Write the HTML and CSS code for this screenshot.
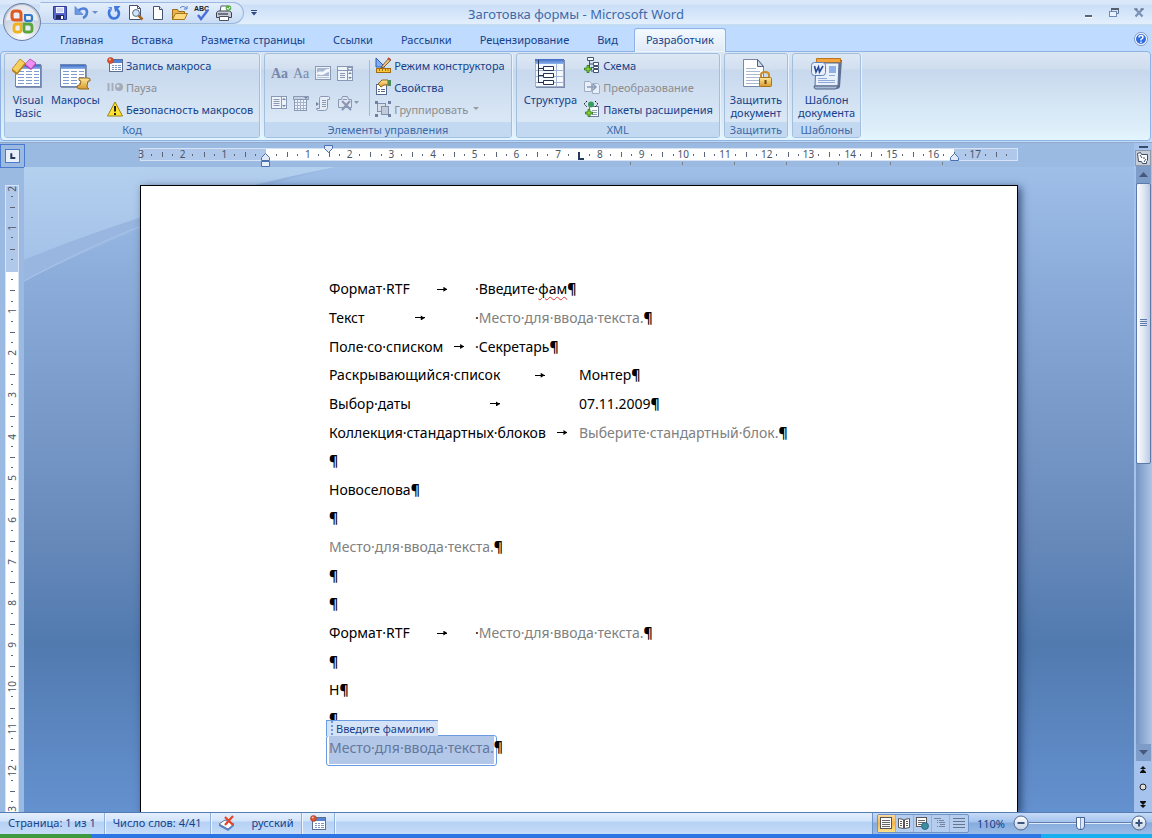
FILE: index.html
```html
<!DOCTYPE html>
<html lang="ru">
<head>
<meta charset="utf-8">
<title>Заготовка формы - Microsoft Word</title>
<link rel="stylesheet" href="styles.css">
</head>
<body>
<svg class="defs" width="0" height="0" aria-hidden="true">
  <defs>
    <linearGradient id="gold" x1="0" y1="0" x2="0" y2="1"><stop offset="0" stop-color="#ffe89a"/><stop offset="1" stop-color="#d99a2b"/></linearGradient>
    <linearGradient id="sky" x1="0" y1="0" x2="0" y2="1"><stop offset="0" stop-color="#3d6bc4"/><stop offset="1" stop-color="#8fb4ee"/></linearGradient>
    <linearGradient id="silver" x1="0" y1="0" x2="0" y2="1"><stop offset="0" stop-color="#ffffff"/><stop offset="1" stop-color="#c3d0e4"/></linearGradient>
    <symbol id="table32" viewBox="0 0 32 32">
      <rect x="4" y="7" width="26" height="23" fill="#8494b0"/><rect x="3.500" y="6.500" width="25" height="22" fill="#fff" stroke="#6f86b3"/>
      <rect x="4" y="7" width="24" height="4" fill="url(#sky)"/>
      <path d="M6 13.500h6M14 13.500h6M22 13.500h5M6 16.500h6M14 16.500h6M22 16.500h5M6 19.500h6M14 19.500h6M22 19.500h5M6 22.500h6M14 22.500h6M22 22.500h5M6 25.500h6M14 25.500h6M22 25.500h5" stroke="#7f9cd0"/>
    </symbol>
    <symbol id="record16" viewBox="0 0 16 16">
      <rect x="2.500" y="2.500" width="13" height="12" fill="#fff" stroke="#5b6f96"/><rect x="3" y="3" width="12" height="3" fill="#5583d4"/>
      <path d="M5 8.500h2M8 8.500h2M11 8.500h3M5 10.500h2M8 10.500h2M11 10.500h3M5 12.500h2M8 12.500h2M11 12.500h3" stroke="#7d97c4"/>
      <circle cx="3.500" cy="3.500" r="3" fill="#d9532f" stroke="#a33a20" stroke-width=".6"/><circle cx="2.800" cy="2.600" r="1" fill="#ffb59a"/>
    </symbol>
    <symbol id="plus7" viewBox="0 0 8 8"><path d="M3 .5h2V3h2.500v2H5v2.500H3V5H.5V3H3z" fill="#8fd43a" stroke="#2f7a1c" stroke-width=".9"/></symbol>
  </defs>
</svg>

<header class="titlebar">
  <div class="quick">
    <div class="qat" role="toolbar" aria-label="Панель быстрого доступа">
      <button class="tool" aria-label="Сохранить"><svg viewBox="0 0 16 16"><path d="M1.500 1.500h13v13h-12l-1-1z" fill="#5566cc" stroke="#2f3a94"/><rect x="4" y="2" width="8" height="6" fill="#f2f5ff"/><path d="M5 4h6M5 6h6" stroke="#aab4dd"/><rect x="4" y="10" width="8" height="4" fill="#23285e"/><rect x="9" y="11" width="2" height="3" fill="#fff"/></svg></button>
      <button class="tool undo" aria-label="Отменить"><svg viewBox="0 0 16 16"><path d="M4 6c4-4 9-3 9 1 0 3-2 5-4 6" fill="none" stroke="#4f7fd6" stroke-width="2.600"/><path d="M1 1.500v8h8z" fill="#6d9ae6" stroke="#4472c8" stroke-width=".6"/></svg></button>
      <button class="drop" aria-label="Список отмены"><svg viewBox="0 0 6 4"><path d="M0 0h6L3 3z" fill="#6c8fc9"/></svg></button>
      <button class="tool" aria-label="Повторить"><svg viewBox="0 0 16 16"><path d="M4 4.500C1.500 9 4 13.500 8 13.500s7-5 3-9" fill="none" stroke="#3f78dc" stroke-width="2.600"/><path d="M8 1h6.500l-5.500 6z" fill="#3f78dc"/><path d="M2 2h4v4z" fill="#5f93ec"/></svg></button>
      <button class="tool" aria-label="Просмотр"><svg viewBox="0 0 16 16"><path d="M1.500.5h8l3 3v11h-11z" fill="#fff" stroke="#46536f"/><path d="M9.500.5v3h3" fill="none" stroke="#46536f"/><circle cx="8" cy="8" r="3.400" fill="#cfe4fb" stroke="#5b6c86"/><path d="M10.500 10.500l4 4" stroke="#a5661f" stroke-width="2.500"/></svg></button>
      <button class="tool" aria-label="Создать"><svg viewBox="0 0 16 16"><path d="M3.500 1.500h6l3 3v10h-9z" fill="#fff" stroke="#46536f"/><path d="M9.500 1.500v3h3" fill="#dbe6f5" stroke="#46536f"/></svg></button>
      <button class="tool" aria-label="Открыть"><svg viewBox="0 0 16 16"><path d="M.5 14.500V4.500h5l1 2h6v3" fill="#e9b54c" stroke="#9a6a18"/><path d="M.5 14.500l3-6h12l-3 6z" fill="#ffd97e" stroke="#a8741d"/><path d="M8 3c2-2 4-2 6 0m1-2v3h-3" fill="none" stroke="#4c79c4"/></svg></button>
      <button class="tool" aria-label="Орфография"><svg viewBox="0 0 16 16"><text x="0" y="6" class="abc">ABC</text><path d="M4 10l3 4 7-9" fill="none" stroke="#4a6fd8" stroke-width="2.400"/></svg></button>
      <button class="tool" aria-label="Печать"><svg viewBox="0 0 16 16"><path d="M4 7l1-6h7l-1 6" fill="#fff" stroke="#555e70"/><path d="M.5 7.500l2-1.500h11l2 1.500v5h-15z" fill="#c9cdd6" stroke="#3c4452"/><rect x="2" y="8" width="10" height="2" fill="#6a7180"/><path d="M3.500 11.500h9v4h-9z" fill="#fff" stroke="#4a5260"/><circle cx="12.500" cy="3" r="2.800" fill="#58ad4a"/><path d="M11 3l1.200 1.400L14 2" fill="none" stroke="#fff"/></svg></button>
    </div>
    <button class="qat-more" aria-label="Настройка панели"><svg viewBox="0 0 8 6"><path d="M1 .5h6" stroke="#2c4a86"/><path d="M1 2h6L4 5.500z" fill="#2c4a86"/></svg></button>
  </div>
  <h1 class="title">Заготовка формы - Microsoft Word</h1>
  <div class="winbtns">
    <button aria-label="Свернуть"><svg viewBox="0 0 10 10"><path d="M1 8h7" stroke="#5b6675" stroke-width="2"/><path d="M1 9.500h7" stroke="#fff"/></svg></button>
    <button aria-label="Восстановить"><svg viewBox="0 0 10 10"><path d="M2.500 5V1.500h7v4h-2" fill="none" stroke="#66748a"/><path d="M2 1h8" stroke="#55606f" stroke-width="2"/><rect x=".5" y="3.500" width="7" height="5" fill="#e9f2fd" stroke="#6e8cba"/></svg></button>
    <button aria-label="Закрыть"><svg viewBox="0 0 10 10"><path d="M1.500 1l7 7.500M8.500 1l-7 7.500" stroke="#7d93b5" stroke-width="2.400"/><path d="M0 1h3.500M6.500 1H10" stroke="#555f70"/></svg></button>
  </div>
</header>

<button class="office" aria-label="Кнопка Office">
  <svg viewBox="0 0 40 40">
    <defs><radialGradient id="orb" cx=".5" cy=".85" r=".9"><stop offset="0" stop-color="#fff"/><stop offset=".5" stop-color="#d4dae6"/><stop offset="1" stop-color="#aeb9cc"/></radialGradient></defs>
    <circle cx="20" cy="20" r="18.500" fill="url(#orb)" stroke="#6d80a3"/><path d="M4 19a16 16 0 0 1 32 0c-9-3-23-3-32 0z" fill="#fff" opacity=".6"/>
    <path d="M19 18h-6q-3 0-3-3v-3q0-3 3-3h3q3 0 3 3z" fill="none" stroke="#df5a23" stroke-width="3"/>
    <path d="M23 13h5q2 0 2 2v2q0 2-2 2h-3q-2 0-2-2z" fill="none" stroke="#2f79c9" stroke-width="2.200"/>
    <path d="M19 22h-4q-3 0-3 3v3q0 2 3 2h2q2 0 2-2z" fill="none" stroke="#f1b21d" stroke-width="2.800"/>
    <path d="M22 22h5q3 0 3 3v3q0 2-3 2h-3q-2 0-2-2z" fill="none" stroke="#5aa63c" stroke-width="2.800"/>
  </svg>
</button>

<nav class="tabs" aria-label="Вкладки ленты">
  <button class="tab">Главная</button>
  <button class="tab">Вставка</button>
  <button class="tab">Разметка страницы</button>
  <button class="tab">Ссылки</button>
  <button class="tab">Рассылки</button>
  <button class="tab">Рецензирование</button>
  <button class="tab">Вид</button>
  <button class="tab active">Разработчик</button>
  <button class="help" aria-label="Справка"><svg viewBox="0 0 14 14"><circle cx="7" cy="7" r="6.500" fill="#fff" stroke="#7a96bf"/><circle cx="7" cy="7" r="5" fill="#2f6be0"/><path d="M5 5.500q0-2 2-2t2 1.700Q9 6.500 7 7.300V8.500M7 9.500v1.500" fill="none" stroke="#fff" stroke-width="1.400"/></svg></button>
</nav>

<section class="ribbon" aria-label="Разработчик">
  <div class="group">
    <div class="group-body">
      <button class="big"><svg viewBox="0 0 32 32"><use href="#table32" width="32" height="32"/><path d="M0 12l8-11 5 4v2L5 17l-5-4z" fill="#b57d1d"/><path d="M0 11l8-10 5 4-8 10z" fill="#f6cf5f" stroke="#b98624" stroke-width=".8"/><path d="M13 7l5-6 6 4v2l-5 5-6-4z" fill="#a83bb0"/><path d="M13 6l5-5 6 4-5 6z" fill="#f08df0" stroke="#b54cbd" stroke-width=".8"/></svg><span>Visual<br>Basic</span></button>
      <button class="big"><svg viewBox="0 0 32 32"><g transform="translate(-2 0)"><use href="#table32" width="32" height="32"/></g><path d="M20 20h9q3 0 2 3h-2l-1 5q0 2 2 3h-9q-3 0-3-2t2-2h1l1-4q-3 0-2-3z" fill="url(#gold)" stroke="#94661c"/></svg><span>Макросы</span></button>
      <div class="stack">
        <button class="small"><svg viewBox="0 0 16 16"><use href="#record16" width="16" height="16"/></svg>Запись макроса</button>
        <button class="small" disabled><svg viewBox="0 0 16 16"><path d="M1.500 4v8M5.500 4v8" stroke="#a5adba" stroke-width="2"/><circle cx="12" cy="8" r="4" fill="#a3abba"/><circle cx="11" cy="7" r="1.500" fill="#d6dbe4"/></svg>Пауза</button>
        <button class="small"><svg viewBox="0 0 16 16"><path d="M8 1l7.500 14H.5z" fill="#ffe135" stroke="#9b8412" stroke-linejoin="round"/><path d="M8 5v5.500M8 12v2" stroke="#222" stroke-width="2"/></svg>Безопасность макросов</button>
      </div>
    </div>
    <h2>Код</h2>
  </div>

  <div class="group">
    <div class="group-body">
      <div class="controls">
        <button disabled aria-label="Форматированный текст"><svg viewBox="0 0 16 16"><text x="0" y="13" class="aa bold">Aa</text></svg></button>
        <button disabled aria-label="Текст"><svg viewBox="0 0 16 16"><text x="0" y="13" class="aa">Aa</text></svg></button>
        <button disabled aria-label="Рисунок"><svg viewBox="0 0 16 16"><rect x=".5" y="1.500" width="15" height="13" fill="#eef3fa" stroke="#8898b5"/><rect x="2" y="3" width="12" height="8" fill="#a9b8d2"/><path d="M2 8c3-3 5 0 7-2s3-2 5-2v3c-3 0-4 3-7 3s-3-1-5 0z" fill="#f4f7fc"/><path d="M2 12.500h12" stroke="#b3c0d6"/></svg></button>
        <button disabled aria-label="Поле со списком"><svg viewBox="0 0 16 16"><rect x=".5" y="1.500" width="15" height="14" fill="#eef3fa" stroke="#8898b5"/><path d="M1 5.500h14M10.500 2v13M3 8.500h5M3 10.500h5M3 12.500h5" stroke="#8898b5"/><rect x="10" y="1" width="6" height="5" fill="#8898b5"/><path d="M11 3h4l-2 2z" fill="#fff"/><path d="M13 7l2 2h-4zM13 14l2-2h-4z" fill="#74849f"/></svg></button>
        <button disabled aria-label="Раскрывающийся список"><svg viewBox="0 0 16 16"><rect x=".5" y="1.500" width="15" height="12" fill="#eef3fa" stroke="#8898b5"/><path d="M10.500 2v11M2.500 4.500h6M2.500 6.500h6M2.500 8.500h6M2.500 10.500h6" stroke="#8898b5"/><path d="M13 3l2 2h-4zM13 12l2-2h-4z" fill="#74849f"/></svg></button>
        <button disabled aria-label="Выбор даты"><svg viewBox="0 0 16 16"><path d="M.5 1.500h15v3H.5z" fill="#c6d1e4" stroke="#8898b5"/><path d="M11 2h4l-2 2z" fill="#74849f"/><rect x="1.500" y="4.500" width="12" height="11" fill="#eef3fa" stroke="#8898b5"/><path d="M2 7.500h11M2 10.500h11M2 13.500h11M4.500 5v10M7.500 5v10M10.500 5v10" stroke="#a3b1ca"/></svg></button>
        <button disabled aria-label="Коллекция блоков"><svg viewBox="0 0 16 16"><path d="M5.500 1.500h8q2 0 1 3h-2v8q0 3-3 3h-6q-2 0-2-2h3v-9q0-3 1-3z" fill="#e6edf7" stroke="#8898b5"/><path d="M7 5.500h4M7 7.500h4M7 9.500h4M7 11.500h4" stroke="#8898b5"/><path d="M1 7l3 2-3 2z" fill="#74849f"/></svg></button>
        <button disabled aria-label="Инструменты прежних версий"><svg viewBox="0 0 22 16"><path d="M1.500 4.500h3l1-3h5l1 3h3v8h-13z" fill="#dfe6f1" stroke="#8898b5"/><path d="M6 4.500h4" stroke="#8898b5"/><path d="M5 6l9 9M13 6l-8 9" stroke="#8898b5" stroke-width="2.200"/><path d="M17 6h5l-2.500 3z" fill="#8898b5"/></svg></button>
      </div>
      <div class="stack divided">
        <button class="small"><svg viewBox="0 0 16 16"><path d="M1 1v9h9z" fill="#7faef2" stroke="#2c58b5"/><path d="M7 9l7-8 2 2-7 7-3 1z" fill="#f1c47a" stroke="#5d4630" stroke-width=".8"/><path d="M13 1l2 2" stroke="#c43" stroke-width="2"/><rect x="1.500" y="11.500" width="14" height="4" fill="#ffc83c" stroke="#a06c12"/><path d="M4.500 12v2M7.500 12v2M10.500 12v2M13 12v2" stroke="#a06c12"/></svg>Режим конструктора</button>
        <button class="small"><svg viewBox="0 0 16 16"><rect x="1.500" y="5.500" width="10" height="10" fill="#fff" stroke="#56698f"/><path d="M3 10.500h2M6 10.500h4M3 12.500h2M6 12.500h4" stroke="#56698f"/><path d="M3 5l4-4h6v5H9L6 8z" fill="url(#gold)" stroke="#8a6320"/><rect x="13" y="1" width="3" height="6" fill="#4f8b58"/></svg>Свойства</button>
        <button class="small" disabled><svg viewBox="0 0 16 16"><rect x="2.500" y="2.500" width="8" height="8" fill="#d7deea" stroke="#8090ad"/><rect x="6.500" y="5.500" width="7" height="8" fill="#c0cadb" stroke="#8090ad"/><path d="M0 0h3v3H0zM13 0h3v3h-3zM0 13h3v3H0zM13 13h3v3h-3z" fill="#6f80a2"/></svg>Группировать<svg class="caret" viewBox="0 0 6 4"><path d="M0 0h6L3 3z" fill="#9a9a9a"/></svg></button>
      </div>
    </div>
    <h2>Элементы управления</h2>
  </div>

  <div class="group">
    <div class="group-body">
      <button class="big"><svg viewBox="0 0 32 32"><rect x="2" y="2" width="29" height="28" fill="#7d8aa5"/><rect x="1.500" y="1.500" width="28" height="27" fill="#f5f8fd" stroke="#9fb0cc"/><rect x="1" y="1" width="29" height="5" fill="url(#sky)"/><path d="M2 12.500h27M2 18.500h27M2 24.500h27M22.500 6v22" stroke="#a5b6d4"/><path d="M4.500 2v23M5 10.500h4M5 17.500h4M5 24.500h4" fill="none" stroke="#26354f"/><path d="M9.500 8.500h10v4h-10zM9.500 15.500h10v4h-10zM9.500 22.500h10v4h-10z" fill="#fff" stroke="#26354f"/></svg><span>Структура</span></button>
      <div class="stack">
        <button class="small"><svg viewBox="0 0 16 16"><path d="M3.500.5h6v3h-6zM9.500 5.500h5v3h-5zM9.500 9.500h5v2h-5zM9.500 12.500h5v3h-5zM5.500 4v9M5.500 7h4M7 10.500h2M7 14h2" fill="#fff" stroke="#3f5375"/><use href="#plus7" x="0" y="8" width="8" height="8"/></svg>Схема</button>
        <button class="small" disabled><svg viewBox="0 0 16 16"><path d="M.5 2.500h5l2 2v8h-7zM8.500 4.500h5l2 2v8h-7z" fill="#e9eff8" stroke="#a0aec6"/><path d="M3 8h8M9 5l3 3-3 3" fill="none" stroke="#8b9bb6" stroke-width="1.500"/></svg>Преобразование</button>
        <button class="small"><svg viewBox="0 0 16 16"><rect x="5.500" y="5.500" width="9" height="10" fill="#fff" stroke="#6c7c98"/><path d="M8 9.500h5M8 11.500h5M8 13.500h5" stroke="#8ea0c0"/><circle cx="7" cy="3.500" r="3" fill="#3d9a63"/><path d="M3 0L0 3l3 3M11 0l3 3-3 3" fill="none" stroke="#111" stroke-dasharray="1.500 1"/><use href="#plus7" x="1" y="8" width="8" height="8"/></svg>Пакеты расширения</button>
      </div>
    </div>
    <h2>XML</h2>
  </div>

  <div class="group">
    <div class="group-body">
      <button class="big"><svg viewBox="0 0 32 32"><path d="M3.500 1.500h14l6 7v20h-20z" fill="#fff" stroke="#7889a5"/><path d="M17.500 1.500v7h6z" fill="#cfdcf0" stroke="#52617d"/><path d="M6 10.500h10M6 13.500h14M6 16.500h14M6 19.500h14M6 22.500h14M6 25.500h14" stroke="#a9b9d3"/><path d="M21 20v-3q0-3 4-3t4 3v3" fill="none" stroke="#c98d23" stroke-width="2"/><rect x="19.500" y="19.500" width="12" height="9" rx="1" fill="url(#gold)" stroke="#a8731a"/><path d="M25.500 22v4" stroke="#6b4710" stroke-width="2"/></svg><span>Защитить<br>документ</span></button>
    </div>
    <h2>Защитить</h2>
  </div>

  <div class="group">
    <div class="group-body">
      <button class="big"><svg viewBox="0 0 32 32"><path d="M7 2h24l-2 27q-1 2-3 2H6z" fill="#5d7191"/><path d="M5.500.5h24v4h-24z" fill="#f2a33c" stroke="#bb761f"/><path d="M5 5h23l-1 23H4z" fill="#e8f0fb" stroke="#5a7099"/><path d="M3 28q0 3 2 3h20l2-3H3z" fill="#aab9d2" stroke="#4d6388"/><path d="M7 20.500h9M7 22.500h17M7 24.500h17M18 17.500h6" stroke="#8fa9d8"/><rect x="18" y="8" width="7" height="7" fill="#8db1e8"/><rect x=".5" y="4.500" width="14" height="13" rx="3" fill="#e9f0fc" stroke="#5c80c2"/><path d="M3.500 8l1.500 6 2.500-5 1 5 3.500-6" fill="none" stroke="#24489c" stroke-width="1.600"/></svg><span>Шаблон<br>документа</span></button>
    </div>
    <h2>Шаблоны</h2>
  </div>
</section>

<main class="workspace">
  <div class="left-rail">
    <button class="tabstop" aria-label="Тип табуляции"><svg viewBox="0 0 15 15"><path d="M6 4v6h5" fill="none" stroke="#243a5c" stroke-width="2.500"/></svg></button>
    <div class="vruler" aria-hidden="true">
      <div class="half"><b>2</b></div><div><b>1</b></div><div></div><div><b>1</b></div><div><b>2</b></div><div><b>3</b></div><div><b>4</b></div><div><b>5</b></div><div><b>6</b></div><div><b>7</b></div><div><b>8</b></div><div><b>9</b></div><div><b>10</b></div><div><b>11</b></div><div><b>12</b></div><div class="half end"><b>3</b></div>
    </div>
  </div>

  <div class="center">
    <div class="hstrip">
      <div class="hruler" aria-hidden="true">
        <div class="scale">
          <div class="half"><b>3</b></div><div><b>2</b></div><div><b>1</b></div><div></div><div><b>1</b></div><div><b>2</b></div><div><b>3</b></div><div><b>4</b></div><div><b>5</b></div><div><b>6</b></div><div><b>7</b></div><div><b>8</b></div><div><b>9</b></div><div><b>10</b></div><div><b>11</b></div><div><b>12</b></div><div><b>13</b></div><div><b>14</b></div><div><b>15</b></div><div><b>16</b></div><div><b>17</b></div><div class="half end"></div>
        </div>
        <svg class="mark indent" viewBox="0 0 9 14"><path d="M.5 7.500V4.500l4-4 4 4v3z" fill="#dfe9f8" stroke="#4a72b0"/><path d="M.5 8.500h8v5h-8z" fill="#e8f0fb" stroke="#4a72b0"/></svg>
        <svg class="mark first" viewBox="0 0 9 9"><path d="M.5.5h8v3l-4 4-4-4z" fill="#dfe9f8" stroke="#4a72b0"/></svg>
        <svg class="mark tabmark" viewBox="0 0 6 8"><path d="M1 0v7h5" fill="none" stroke="#243a5c" stroke-width="2"/></svg>
        <svg class="mark right" viewBox="0 0 9 8"><path d="M.5 7.500V4.500l4-4 4 4v3z" fill="#dfe9f8" stroke="#4a72b0"/></svg>
        <div class="defaults"><i></i><i></i><i></i><i></i><i></i><i></i><i></i></div>
      </div>
    </div>

    <div class="canvas">
      <svg class="swoosh" viewBox="0 0 340 120" aria-hidden="true">
        <defs><linearGradient id="sw" x1="0" y1="0" x2="0" y2="1"><stop offset="0" stop-color="#b4d0ef"/><stop offset="1" stop-color="#a4c1e8"/></linearGradient></defs>
        <path d="M0 93Q150 32 311 0Q150 40 0 114z" fill="#98b6df"/>
        <path d="M0 0h311Q150 32 0 93z" fill="url(#sw)"/>
        <path d="M0 114Q90 66 160 44" fill="none" stroke="#a9c6ec"/>
      </svg>
      <article class="page">
        <div class="text">
          <p><span class="lead t1">Формат·RTF<i class="arrow"></i></span><span>·Введите·<u class="spell">фам</u><b>¶</b></span></p>
          <p><span class="lead t1">Текст<i class="arrow"></i></span><span>·<span class="ph">Место·для·ввода·текста.</span><b>¶</b></span></p>
          <p><span class="lead t1">Поле·со·списком<i class="arrow"></i></span><span>·Секретарь<b>¶</b></span></p>
          <p><span class="lead t2">Раскрывающийся·список<i class="arrow"></i></span><span>Монтер<b>¶</b></span></p>
          <p><span class="lead t2">Выбор·даты<i class="arrow"></i></span><span>07.11.2009<b>¶</b></span></p>
          <p><span class="lead t2">Коллекция·стандартных·блоков<i class="arrow"></i></span><span><span class="ph">Выберите·стандартный·блок.</span><b>¶</b></span></p>
          <p><b>¶</b></p>
          <p>Новоселова<b>¶</b></p>
          <p><b>¶</b></p>
          <p><span class="ph">Место·для·ввода·текста.</span><b>¶</b></p>
          <p><b>¶</b></p>
          <p><b>¶</b></p>
          <p><span class="lead t1">Формат·RTF<i class="arrow"></i></span><span>·<span class="ph">Место·для·ввода·текста.</span><b>¶</b></span></p>
          <p><b>¶</b></p>
          <p>Н<b>¶</b></p>
          <p><b>¶</b></p>
          <p class="field-row"><span class="field"><span class="field-tag">Введите фамилию</span><span class="selected">Место·для·ввода·текста.</span></span><b>¶</b></p>
        </div>
      </article>
    </div>
  </div>

  <div class="right-rail">
    <div class="split"></div>
    <button class="ruler-toggle" aria-label="Линейка"><svg viewBox="0 0 14 14"><path d="M1.500 2.500l3-1 1 2h6v6l-1 1v2h-4l-1-2h-3z" fill="#fff" stroke="#3d4d6b"/><path d="M4 4l2 3M8 6v2M10 8l-2 3" stroke="#3d4d6b"/></svg></button>
    <button class="sb-arrow" aria-label="Вверх"><svg viewBox="0 0 9 5"><path d="M0 5l4.500-5L9 5z" fill="#46587c"/></svg></button>
    <div class="track"><div class="thumb"><i></i></div></div>
    <button class="sb-arrow" aria-label="Вниз"><svg viewBox="0 0 9 5"><path d="M0 0l4.500 5L9 0z" fill="#46587c"/></svg></button>
    <button class="browse" aria-label="Предыдущая страница"><svg viewBox="0 0 8 8"><path d="M4 0l3 3H1zM4 3l3 3H1zM1 6h6v1H1z" fill="#111"/></svg></button>
    <button class="browse" aria-label="Выбор объекта перехода"><svg viewBox="0 0 8 8"><circle cx="4" cy="4" r="3" fill="#ddd" stroke="#222"/></svg></button>
    <button class="browse" aria-label="Следующая страница"><svg viewBox="0 0 8 8"><path d="M4 8l3-3H1zM4 5l3-3H1zM1 1h6v1H1z" fill="#111"/></svg></button>
  </div>
</main>

<footer class="status">
  <button class="cell">Страница: 1 из 1</button>
  <button class="cell">Число слов: 4/41</button>
  <button class="cell lang"><svg viewBox="0 0 16 16"><path d="M0 9l6-4 9 4-6 5z" fill="#fff" stroke="#56719f"/><path d="M0 9v2l9 5v-2zM9 16l6-5V9l-6 5z" fill="#5c83c4"/><path d="M6 2l8 8M14 1L6 10" stroke="#e5432a" stroke-width="2.200"/></svg><span>русский</span></button>
  <button class="cell macro" aria-label="Запись макроса"><svg viewBox="0 0 16 16"><use href="#record16" width="16" height="16"/></svg></button>
  <div class="zoombar">
    <div class="views">
      <button class="on" aria-label="Разметка страницы"><svg viewBox="0 0 14 14"><rect x="1.500" y="1.500" width="11" height="11" fill="#fff" stroke="#555"/><path d="M3 4.500h8M3 6.500h8M3 8.500h8M3 10.500h8" stroke="#666"/></svg></button>
      <button aria-label="Режим чтения"><svg viewBox="0 0 14 14"><path d="M1.500 2.500l5 1v9l-5-1zM12.500 2.500l-5 1v9l5-1z" fill="#fff" stroke="#555"/><path d="M3 5.500h2M3 7.500h2M3 9.500h2M9 5.500h2M9 7.500h2M9 9.500h2" stroke="#555"/></svg></button>
      <button aria-label="Веб-документ"><svg viewBox="0 0 14 14"><rect x="1.500" y="1.500" width="10" height="9" fill="#fff" stroke="#555"/><path d="M3 4.500h7M3 6.500h7M3 8.500h4" stroke="#666"/><circle cx="10" cy="10" r="3.500" fill="#3b8fa0" stroke="#285e8c" stroke-width=".8"/></svg></button>
      <button aria-label="Структура"><svg viewBox="0 0 14 14"><path d="M1 2.500h7M4 4.500h1M6 4.500h5M4 6.500h1M6 6.500h6M7 8.500h5M4 10.500h1M6 10.500h6" stroke="#75839b"/></svg></button>
      <button aria-label="Черновик"><svg viewBox="0 0 14 14"><path d="M1 2.500h12M1 5.500h12M1 8.500h12M1 11.500h12" stroke="#66748c"/></svg></button>
    </div>
    <button class="percent">110%</button>
    <button class="round" aria-label="Уменьшить"><svg viewBox="0 0 16 16"><circle cx="8" cy="8" r="7" fill="url(#silver)" stroke="#4a6492"/><path d="M4.500 8h7" stroke="#3d5680" stroke-width="2"/></svg></button>
    <input class="zoom" type="range" min="0" max="100" value="50" aria-label="Масштаб">
    <button class="round" aria-label="Увеличить"><svg viewBox="0 0 16 16"><circle cx="8" cy="8" r="7" fill="url(#silver)" stroke="#4a6492"/><path d="M4.500 8h7M8 4.500v7" stroke="#3d5680" stroke-width="2"/></svg></button>
  </div>
</footer>
<div class="taskbar"><div class="start"></div><div class="tray"></div></div>
</body>
</html>
```
FILE: styles.css
```css
* { box-sizing: border-box; }

body {
  margin: 0;
  height: 100vh;
  display: flex;
  flex-direction: column;
  position: relative;
  overflow: hidden;
  background: #bfdbff;
  color: #15428b;
  font: 11px/13px "Noto Sans", "Open Sans", sans-serif;
}

button {
  margin: 0;
  padding: 0;
  border: 0;
  background: none;
  color: inherit;
  font: inherit;
}

svg { display: block; flex: none; }
h1, h2, p { margin: 0; font-weight: normal; }
.defs { position: absolute; }

/* Title bar */
.titlebar {
  flex: none;
  height: 26px;
  display: grid;
  grid-template-columns: 1fr auto 1fr;
  align-items: center;
  background: linear-gradient(#dae8fa 0 4px, #cadef7 5px, #e3effd 24px, #a9cdea 25px, #d8e8fa 26px);
}
.quick { display: flex; align-items: center; padding-left: 40px; }
.qat {
  display: flex;
  align-items: center;
  gap: 6px;
  height: 22px;
  padding: 0 11px;
  border: 1px solid #9ab8e0;
  border-left-color: transparent;
  border-radius: 0 11px 11px 0;
  background: linear-gradient(#e3eefc, #c9dcf4);
}
.tool svg { width: 16px; height: 16px; }
.undo { margin-right: -4px; }
.drop svg { width: 6px; height: 4px; }
.drop { margin-right: 2px; }
.abc { font: bold 7px "Liberation Sans", sans-serif; fill: #222; }
.qat-more { margin-left: 6px; }
.qat-more svg { width: 8px; height: 6px; }
.title {
  padding-top: 2px;
  font-size: 13px;
  line-height: 16px;
  color: #3e6aaa;
}
.winbtns { justify-self: end; display: flex; gap: 15px; padding-right: 8px; }
.winbtns svg { width: 10px; height: 10px; }

.office { position: absolute; left: 2px; top: 2px; z-index: 2; }
.office svg { width: 40px; height: 40px; }

/* Tabs */
.tabs {
  flex: none;
  height: 25px;
  display: flex;
  align-items: flex-end;
  gap: 4px;
  padding: 0 4px 0 48px;
}
.tab {
  height: 23px;
  padding: 0 11px 2px;
  border: 1px solid transparent;
  border-bottom: 0;
  white-space: nowrap;
}
.tab.active {
  border-color: #8db2e3;
  border-radius: 3px 3px 0 0;
  background: linear-gradient(#f4f9ff, #dfe9f6);
  box-shadow: inset 0 0 0 1px #eaf7ff;
  margin-bottom: -1px;
  height: 24px;
  z-index: 1;
}
.help { margin-left: auto; align-self: center; }
.help svg { width: 14px; height: 14px; }

/* Ribbon */
.ribbon {
  flex: none;
  display: flex;
  gap: 4px;
  height: 90px;
  margin-right: 1px;
  padding: 1px 3px 2px;
  border: 1px solid #8db2e3;
  border-radius: 4px;
  background: linear-gradient(#dbe6f4 0, #cfdded 17px, #c7d8ed 18px, #dff0fb 80px, #e3f6ff);
}
.group {
  display: flex;
  flex-direction: column;
  border: 1px solid #a3bfdf;
  border-radius: 3px;
  background: linear-gradient(#dde8f5 0, #d2dfef 15px, #c8d8ed 16px, #dae8f6 68px);
  box-shadow: 1px 0 0 #e8f2fc;
}
.group h2 {
  height: 15px;
  border-radius: 0 0 2px 2px;
  background: #c2d9f1;
  color: #3e6aaa;
  font-size: 11px;
  line-height: 15px;
  text-align: center;
}
.group-body { flex: 1; display: flex; padding: 0 6px 0 5px; }
.big {
  display: flex;
  flex-direction: column;
  align-items: center;
  gap: 3px;
  padding-top: 4px;
  margin-right: 7px;
}
.big:first-child { padding-left: 2px; }
.group-body .big:only-child { margin: 0; padding-left: 0; }
.group-body:has(.big:only-child) { justify-content: center; padding: 0 5px; }
.big svg { width: 32px; height: 32px; }
.stack { display: flex; flex-direction: column; }
.small {
  display: flex;
  align-items: center;
  gap: 3px;
  height: 22px;
  white-space: nowrap;
}
.small svg { width: 16px; height: 16px; }
.small .caret { width: 6px; height: 4px; margin-left: 2px; }
.small:disabled { color: #8d8d8d; }
.controls {
  display: grid;
  grid-template-columns: repeat(4, 22px);
  grid-template-rows: 30px 30px;
  align-items: center;
  padding: 4px 4px 0 1px;
}
.controls svg { width: 16px; height: 16px; overflow: visible; }
.controls button:last-child svg { width: 22px; }
.aa { font: 14px "Liberation Serif", serif; fill: #7888a8; }
.bold { font-weight: bold; }
.divided {
  margin-left: 6px;
  padding-left: 6px;
  background: linear-gradient(#9dbbe0, #9dbbe0) 0 6px / 1px 56px no-repeat;
}

/* Workspace */
.workspace {
  flex: 1;
  min-height: 0;
  display: flex;
  margin-top: 1px;
  border-top: 1px solid #92a9c9;
  background: #9bbae1;
}
.left-rail {
  flex: none;
  width: 24px;
  display: flex;
  flex-direction: column;
}
.tabstop {
  width: 25px;
  height: 24px;
  margin-top: 1px;
  padding: 4px;
  border: 1px solid #4a7ad0;
  flex: none;
}
.tabstop svg { width: 15px; height: 14px; background: #e8f0fb; border: 1px solid #4a7ad0; }
.vruler {
  flex: 1;
  min-height: 0;
  display: grid;
  grid-template-rows: 1fr repeat(14, 2fr) 1fr;
  width: 14px;
  margin: 17px 0 0 5px;
  border: 1px solid #d7e3f4;
  border-bottom: 0;
  background: linear-gradient(#b0c8ea 0 86px, #fff 86px);
  color: #4a5568;
  font: 10px/12px "Noto Sans", sans-serif;
}
.vruler div {
  display: flex;
  align-items: center;
  justify-content: center;
  min-height: 0;
  background:
    linear-gradient(#5c6577, #5c6577) 50% 0 / 5px 1px no-repeat,
    linear-gradient(#5c6577, #5c6577) 50% 25% / 2px 1px no-repeat,
    linear-gradient(#5c6577, #5c6577) 50% 75% / 2px 1px no-repeat;
}
.vruler b { writing-mode: vertical-rl; rotate: 180deg; font-weight: normal; }
.vruler .half { align-items: flex-start; background: linear-gradient(#5c6577, #5c6577) 50% 50% / 2px 1px no-repeat; }
.vruler .end {
  align-items: flex-end;
  background:
    linear-gradient(#5c6577, #5c6577) 50% 0 / 5px 1px no-repeat,
    linear-gradient(#5c6577, #5c6577) 50% 50% / 2px 1px no-repeat;
}

.center { flex: 1; min-width: 0; display: flex; flex-direction: column; }
.hstrip { flex: none; height: 24px; padding-top: 5px; }
.hruler { position: relative; width: 878px; max-width: 100%; margin: 0 auto; }
.scale {
  display: grid;
  grid-template-columns: 1fr repeat(20, 2fr) 1fr;
  height: 13px;
  border: 1px solid #d7e3f4;
  background: linear-gradient(90deg, #b0c8ea 0 14.3%, #fff 14.3% 92.8%, #b0c8ea 92.8%);
  color: #4a5568;
  font: 10px/11px "Noto Sans", sans-serif;
}
.scale div {
  display: flex;
  justify-content: center;
  min-width: 0;
  background:
    linear-gradient(#5c6577, #5c6577) 0 50% / 1px 5px no-repeat,
    linear-gradient(#5c6577, #5c6577) 25% 50% / 1px 2px no-repeat,
    linear-gradient(#5c6577, #5c6577) 75% 50% / 1px 2px no-repeat;
}
.scale b { font-weight: normal; }
.scale .half { background: linear-gradient(#5c6577, #5c6577) 50% 50% / 1px 2px no-repeat; }
.scale .half b { width: 0; margin-right: auto; display: flex; justify-content: center; }
.scale .end {
  background:
    linear-gradient(#5c6577, #5c6577) 0 50% / 1px 5px no-repeat,
    linear-gradient(#5c6577, #5c6577) 50% 50% / 1px 2px no-repeat;
}
.mark { position: absolute; width: 9px; }
.indent { left: 121px; top: 5px; height: 14px; }
.first { left: 184px; top: -3px; height: 9px; }
.tabmark { left: 438px; top: 4px; width: 6px; height: 8px; }
.right { left: 810px; top: 5px; height: 8px; }
.defaults { display: flex; gap: 51px; padding: 1px 0 0 490px; }
.defaults i { width: 1px; height: 3px; background: #7a7f88; }

.canvas {
  flex: 1;
  min-height: 0;
  position: relative;
  overflow: hidden;
  padding-top: 18px;
  background: linear-gradient(#9fbfe9 0, #8cadda 17%, #6789ba 58%, #517aaf 74%, #6491cf 100%);
}
.swoosh { position: absolute; left: 0; top: 0; width: 340px; height: 120px; }
.page {
  position: relative;
  width: 878px;
  max-width: 100%;
  height: 100%;
  margin: 0 auto;
  padding: 89px 188px 0;
  border: 1px solid #000;
  border-bottom: 0;
  background: #fff;
  box-shadow: 3px 2px 8px rgba(20, 40, 80, .7);
}
.text {
  display: grid;
  grid-auto-rows: 1fr;
  min-height: 487px;
  color: #000;
  font: 14px/24px "Noto Sans", sans-serif;
}
.text p { display: flex; align-items: center; white-space: nowrap; }
.lead { display: flex; align-items: center; }
.t1 { width: 146px; }
.t2 { width: 250px; }
.arrow {
  position: relative;
  width: 10px;
  height: 1px;
  margin: 0 auto;
  background: #000;
}
.arrow::after {
  content: "";
  position: absolute;
  right: 0;
  top: -2px;
  width: 5px;
  height: 5px;
  background: #000;
  clip-path: polygon(20% 0, 100% 50%, 20% 100%);
}
.ph { color: #808080; }
.spell { text-decoration: underline wavy #d33 1px; text-underline-offset: 2px; }
.text .field-row { align-items: flex-start; height: 28px; }
.field-row > b { line-height: 28px; position: relative; }
.field {
  position: relative;
  display: flex;
  flex: none;
  margin: 2px -3px 0 -3px;
  padding: 0 2px 1px;
  border: 1px solid #6a9ae0;
  border-radius: 3px;
}
.selected { padding-bottom: 4px; background: #b3c7e8; color: #64789c; }
.field-tag {
  position: absolute;
  left: -1px;
  bottom: 100%;
  padding: 1px 4px 1px 9px;
  border-top: 1px solid #6a9ae0;
  border-left: 1px solid #6a9ae0;
  background: radial-gradient(circle, #6a9ae0 1px, transparent 1px) 3px 3px / 4px 4px repeat-y, #d5e3f9;
  color: #15428b;
  font: 11px/13px "Noto Sans", sans-serif;
}

/* Vertical scroll bar */
.right-rail {
  flex: none;
  width: 18px;
  display: flex;
  flex-direction: column;
  align-items: center;
  background: #a6c3ee;
}
.split { width: 9px; height: 2px; margin: 3px 0 2px; background: #3a4a68; flex: none; }
.ruler-toggle { border: 1px solid #8c98ac; background: #c6cdd9; }
.ruler-toggle svg { width: 14px; height: 14px; }
.sb-arrow {
  flex: none;
  width: 15px;
  height: 17px;
  display: grid;
  place-items: center;
  background: #7d9cc8;
}
.sb-arrow svg { width: 9px; height: 5px; }
.track { flex: 1; min-height: 0; width: 15px; background: linear-gradient(90deg, #7594c2, #a9c2e4); }
.thumb {
  height: 50%;
  display: grid;
  place-items: center;
  border: 1px solid #5c79a8;
  border-radius: 2px;
  background: linear-gradient(90deg, #fafcff, #dfe7f4 50%, #bccbe3);
}
.thumb i { width: 7px; height: 8px; background: repeating-linear-gradient(#5c79a8 0 1px, transparent 1px 2px); }
.browse { flex: none; height: 17px; display: grid; place-items: center; }
.browse svg { width: 8px; height: 8px; }

/* Status bar */
.status {
  flex: none;
  height: 22px;
  display: flex;
  border-top: 1px solid #567db1;
  background: linear-gradient(#e3effd 0, #d3e4fa 8px, #b5d1f5 9px, #c7dcf8 100%);
}
.cell {
  padding: 0 8px 2px;
  border-right: 1px solid #8fb1de;
  box-shadow: 1px 0 0 #eef5fe;
  white-space: nowrap;
}
.lang { display: flex; align-items: center; gap: 17px; }
.cell svg { width: 16px; height: 16px; }
.zoombar {
  margin-left: auto;
  display: flex;
  align-items: center;
  padding: 0 5px 1px 4px;
  border-left: 1px solid #6f93c5;
  background: linear-gradient(#c6dbf7 0, #a4c3ed 9px, #86abdc 10px, #9bbce8 100%);
}
.views { display: flex; border: 1px solid #6f93c5; border-radius: 2px; background: #b5cdee; }
.views button { width: 18px; height: 17px; display: grid; place-items: center; border-right: 1px solid #94b2dc; }
.views button:last-child { border-right: 0; }
.views .on { background: linear-gradient(#fbd9a0, #f8b64a 50%, #fde28a); }
.views svg { width: 14px; height: 14px; }
.percent { padding: 0 8px; }
.round svg { width: 16px; height: 16px; }
.zoom {
  appearance: none;
  width: 102px;
  height: 16px;
  margin: 0;
  background: linear-gradient(#5f7fb0 0 1px, #dfeafa 1px 2px) 0 7px / 100% 2px no-repeat;
}
.zoom::-webkit-slider-thumb {
  appearance: none;
  width: 9px;
  height: 13px;
  border: 1px solid #4a6492;
  border-radius: 1px 1px 5px 5px;
  background: linear-gradient(90deg, #fff 3px, #7d97c2 3px 4px, #dbe5f5 4px);
}

.taskbar { flex: none; height: 4px; display: flex; background: #2c76e4; }
.start { width: 8%; background: #3e9a3c; border-radius: 0 4px 0 0; }
.tray { width: 111px; margin-left: auto; background: #18aef0; }
```
